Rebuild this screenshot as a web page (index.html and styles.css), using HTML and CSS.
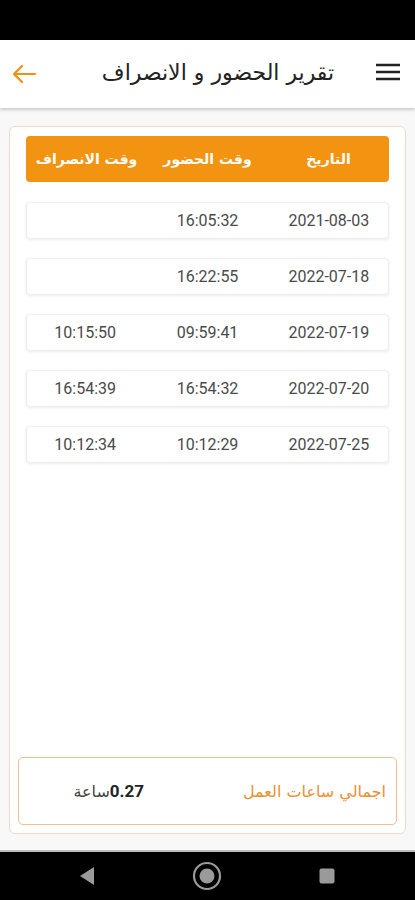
FILE: index.html
```html
<!DOCTYPE html>
<html lang="ar" dir="rtl">
<head>
<meta charset="utf-8">
<title>تقرير الحضور و الانصراف</title>
<link rel="stylesheet" href="styles.css">
</head>
<body>
<div class="screen">
  <div class="status"></div>
  <header class="appbar">
    <button class="icon-btn menu" aria-label="menu">
      <svg width="26" height="18" viewBox="0 0 26 18"><path d="M1 2h24M1 9h24M1 16h24" stroke="#222" stroke-width="2.4" fill="none"/></svg>
    </button>
    <h1 class="title">تقرير الحضور و الانصراف</h1>
    <button class="icon-btn back" aria-label="back">
      <svg width="26" height="20" viewBox="0 0 26 20"><path d="M24 10H3M11 2L3 10l8 8" stroke="#f0900f" stroke-width="2.2" fill="none" stroke-linecap="round" stroke-linejoin="round"/></svg>
    </button>
  </header>
  <main class="main">
    <section class="card">
      <div class="table">
        <div class="thead">
          <div>التاريخ</div>
          <div>وقت الحضور</div>
          <div>وقت الانصراف</div>
        </div>
        <div class="rows">
          <div class="row"><div>2021-08-03</div><div>16:05:32</div><div></div></div>
          <div class="row"><div>2022-07-18</div><div>16:22:55</div><div></div></div>
          <div class="row"><div>2022-07-19</div><div>09:59:41</div><div>10:15:50</div></div>
          <div class="row"><div>2022-07-20</div><div>16:54:32</div><div>16:54:39</div></div>
          <div class="row"><div>2022-07-25</div><div>10:12:29</div><div>10:12:34</div></div>
        </div>
      </div>
      <div class="total">
        <div class="total-label">اجمالي ساعات العمل</div>
        <div class="total-value"><span class="num">0.27</span><span class="unit">ساعة</span></div>
      </div>
    </section>
  </main>
  <nav class="navbar">
    <svg width="16" height="20" viewBox="0 0 16 20"><path d="M15 1v18L1 10z" fill="#9a9a9a"/></svg>
    <svg width="30" height="30" viewBox="0 0 30 30"><circle cx="15" cy="15" r="13" stroke="#9a9a9a" stroke-width="2.2" fill="none"/><circle cx="15" cy="15" r="7.5" fill="#9a9a9a"/></svg>
    <svg width="16" height="16" viewBox="0 0 16 16"><rect x="0.5" y="0.5" width="15" height="15" rx="2" fill="#9a9a9a"/></svg>
  </nav>
</div>
</body>
</html>
```
FILE: styles.css
```css
* { box-sizing: border-box; }
html, body { margin: 0; padding: 0; }
body {
  font-family: Roboto, "DejaVu Sans", sans-serif;
  background: #f8f8f8;
}
.screen {
  width: 415px;
  height: 900px;
  display: flex;
  flex-direction: column;
}
.status {
  height: 40px;
  background: #000;
  flex: none;
}
.appbar {
  height: 68px;
  flex: none;
  background: #fff;
  display: flex;
  align-items: center;
  justify-content: space-between;
  padding: 0 13px 0 10px;
  box-shadow: 0 2px 3px rgba(0,0,0,0.18);
  position: relative;
  z-index: 1;
}
.icon-btn {
  background: none;
  border: 0;
  padding: 0;
  width: 28px;
  height: 28px;
  display: flex;
  align-items: center;
  justify-content: center;
}
.menu { margin-top: -4px; }
.title {
  margin: 0;
  font-family: "DejaVu Sans", sans-serif;
  font-size: 22px;
  font-weight: normal;
  color: #222;
  flex: 1;
  text-align: center;
  padding-left: 24px;
  margin-top: -4px;
  white-space: nowrap;
}
.main {
  flex: 1;
  padding: 18px 9px 16px;
  display: flex;
}
.card {
  flex: 1;
  background: #fff;
  border: 1px solid #f7d8c0;
  border-radius: 6px;
  padding: 9px 8px 8px;
  display: flex;
  flex-direction: column;
}
.table {
  flex: 1;
  padding: 0 8px;
}
.thead, .row {
  display: grid;
  grid-template-columns: 1fr 1fr 1fr;
  align-items: center;
  text-align: center;
}
.thead {
  height: 46px;
  background: #f29312;
  border-radius: 4px;
  color: #fff;
  font-family: "DejaVu Sans", sans-serif;
  font-weight: bold;
  font-size: 14px;
}
.rows {
  display: flex;
  flex-direction: column;
  gap: 19px;
  padding-top: 20px;
}
.row {
  height: 37px;
  background: #fff;
  border: 1px solid #ececec;
  border-radius: 4px;
  box-shadow: 0 1px 3px rgba(0,0,0,0.08);
  color: #4a4a4a;
  font-size: 16px;
}
.row > div:first-child { padding-left: 2px; }
.row > div:last-child { padding-right: 4px; }
.total {
  height: 68px;
  border: 1px solid #f5bd90;
  border-radius: 5px;
  display: flex;
  align-items: center;
}
.total-label {
  flex: 1;
  text-align: right;
  padding-right: 10px;
  color: #ec9033;
  font-family: "DejaVu Sans", sans-serif;
  font-size: 16px;
}
.total-value {
  flex: 1;
  text-align: center;
  padding-right: 8px;
  color: #222;
}
.num {
  font-weight: bold;
  font-size: 17px;
}
.unit {
  font-family: "DejaVu Sans", sans-serif;
  font-size: 16px;
  color: #444;
}
.navbar {
  height: 50px;
  flex: none;
  background: #000;
  border-top: 2px solid #bdbdbd;
  display: flex;
  align-items: center;
  justify-content: space-between;
  padding: 0 80px 0 79px;
  direction: ltr;
}
```
